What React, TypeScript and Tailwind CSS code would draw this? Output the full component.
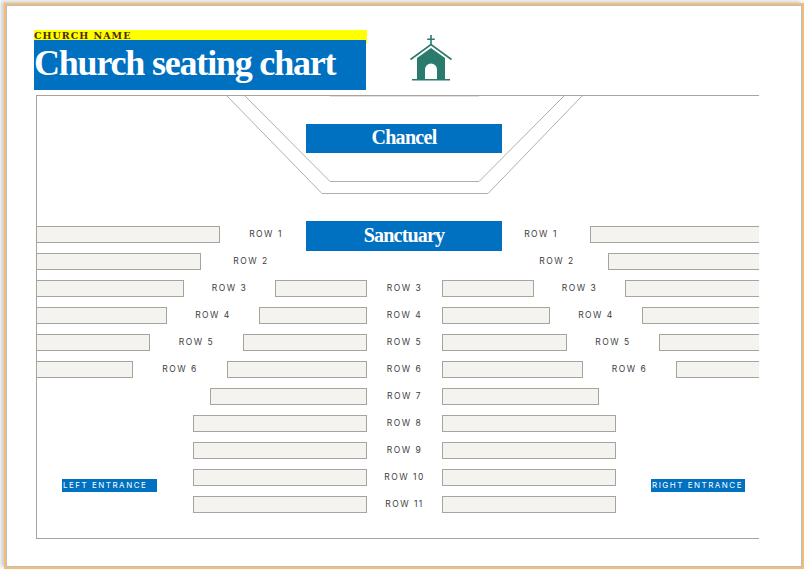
const seat = (w: number) => ({ type: "seat", w });
const edgeSeat = (w: number) => ({ type: "seat", w, open: true });
const label = (w: number, text: string, pad = {}) => ({ type: "label", w, text, pad });
const gap = (w: number) => ({ type: "gap", w });

// widths run from x=36 to x=759, every row is 17px high on a 27px pitch
const rows: any[][] = [
  [seat(184), label(86, "ROW 1", { paddingLeft: 6 }), { type: "sanctuary", w: 196 }, label(88, "ROW 1", { paddingRight: 10 }), edgeSeat(169)],
  [seat(165), label(100, "ROW 2"), gap(205), label(102, "ROW 2"), edgeSeat(151)],
  [seat(148), label(91, "ROW 3"), seat(92), label(75, "ROW 3"), seat(92), label(91, "ROW 3"), edgeSeat(134)],
  [seat(131), label(92, "ROW 4"), seat(108), label(75, "ROW 4"), seat(108), label(92, "ROW 4"), edgeSeat(117)],
  [seat(114), label(93, "ROW 5"), seat(124), label(75, "ROW 5"), seat(125), label(92, "ROW 5"), edgeSeat(100)],
  [seat(97), label(94, "ROW 6"), seat(140), label(75, "ROW 6"), seat(141), label(93, "ROW 6"), edgeSeat(83)],
  [gap(174), seat(157), label(75, "ROW 7"), seat(157)],
  [gap(157), seat(174), label(75, "ROW 8"), seat(174)],
  [gap(157), seat(174), label(75, "ROW 9"), seat(174)],
  [gap(26), { type: "entrance", w: 95, text: "LEFT ENTRANCE" }, gap(36), seat(174), label(75, "ROW 10"), seat(174), gap(35), { type: "entrance", w: 94, text: "RIGHT ENTRANCE" }],
  [gap(157), seat(174), label(75, "ROW 11"), seat(174)],
];

function Cell({ cell }: { cell: any }) {
  if (cell.type === "seat") {
    return (
      <div
        className={cell.open ? "h-[17px] shrink-0 border border-r-0 border-[#a5a59d] bg-[#f4f3ef]" : "h-[17px] shrink-0 border border-[#a5a59d] bg-[#f4f3ef]"}
        style={{ width: cell.w }}
      />
    );
  }
  if (cell.type === "label") {
    return (
      <div className="shrink-0 text-center text-[8.5px] leading-[17px] tracking-[1.5px] text-[#3d3d3d] [font-family:'Inter',sans-serif]" style={{ width: cell.w, ...cell.pad }}>
        {cell.text}
      </div>
    );
  }
  if (cell.type === "sanctuary") {
    return (
      <div className="-mt-[5px] flex h-[30px] shrink-0 items-center justify-center bg-[#0070c0] pb-[2px] text-[20px] font-bold tracking-[-0.8px] text-white [font-family:'Liberation_Serif',serif]" style={{ width: cell.w }}>
        Sanctuary
      </div>
    );
  }
  if (cell.type === "entrance") {
    return (
      <div className="mt-[10px] h-[13px] shrink-0 bg-[#0070c0] pl-px text-[8px] leading-[13px] tracking-[1.5px] whitespace-nowrap text-white [font-family:'Inter',sans-serif]" style={{ width: cell.w }}>
        {cell.text}
      </div>
    );
  }
  return <div className="shrink-0" style={{ width: cell.w }} />;
}

function ChurchIcon() {
  return (
    <svg width="44" height="46" viewBox="0 0 44 46" className="block">
      <path d="M21.2 0h1.6v3.6h3v1.5h-3V10h-1.6V5.100h-3V3.600h3z" fill="#2b7a6e" />
      <path d="M1.500 24.500 22 9.500l20.500 15" fill="none" stroke="#2b7a6e" strokeWidth="1.600" />
      <path fillRule="evenodd" fill="#2b7a6e" d="M22 13 36 23V44H8V23zM16 44h12V34.500a6 6 0 0 0-12 0z" />
      <rect x="3" y="44" width="38" height="1.500" fill="#2b7a6e" />
    </svg>
  );
}

export default function App() {
  return (
    <div className="h-[570px] w-[804px] overflow-hidden bg-white pt-[3px] pl-[4px]">
      <div className="h-[566px] w-[800px] border-2 border-[#f4bd73] shadow-[-3px_-2px_4px_rgba(0,0,0,0.2)]">
        <div className="h-full w-full border border-[#b9bec4] bg-white pt-[24px] pl-[27px]">
          <div className="flex items-start">
            <div className="w-[333px]">
              <div className="h-[14px] bg-[#ffff00] text-[9.5px] leading-[11px] font-bold tracking-[1px] text-[#4a2a08] [font-family:'DejaVu_Serif',serif]">
                CHURCH NAME
              </div>
              <div className="-mt-[4px] h-[50px] w-[332px] bg-[#0070c0] text-[36px] leading-[46px] font-bold tracking-[-1.2px] whitespace-nowrap text-white [font-family:'Liberation_Serif',serif]">
                Church seating chart
              </div>
            </div>
            <div className="mt-[5px] ml-[42px]">
              <ChurchIcon />
            </div>
          </div>
          <div className="relative mt-[5px] ml-[2px] h-[444px] w-[723px] border-t border-b border-l border-[#a5a59d]">
            <svg width="723" height="110" viewBox="0 0 723 110" className="absolute top-0 -left-px">
              <path d="M209 0 294 85.500H443L528 0" fill="none" stroke="#b0b0aa" strokeWidth="1" />
              <path d="M191 0 286 97.500H452L546 0" fill="none" stroke="#b0b0aa" strokeWidth="1" />
              <path d="M294 0.500H443" fill="none" stroke="#e2e1da" strokeWidth="1" />
            </svg>
            <div className="relative mt-[28px] ml-[269px] flex h-[29px] w-[196px] items-center justify-center bg-[#0070c0] pb-[4px] text-[20px] font-bold tracking-[-0.7px] text-white [font-family:'Liberation_Serif',serif]">
              Chancel
            </div>
            <div className="relative mt-[73px] -ml-px flex flex-col gap-[10px]">
              {rows.map((row, i) => (
                <div key={i} className="flex h-[17px]">
                  {row.map((cell, j) => (
                    <Cell key={j} cell={cell} />
                  ))}
                </div>
              ))}
            </div>
          </div>
        </div>
      </div>
    </div>
  );
}
